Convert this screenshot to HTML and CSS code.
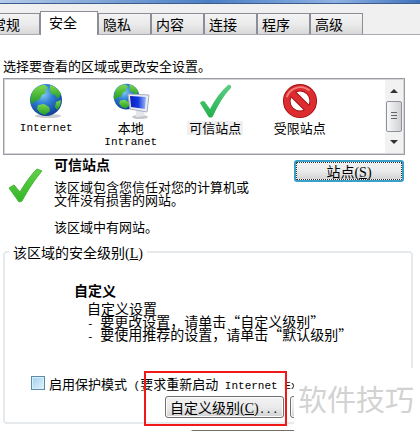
FILE: index.html
```html
<!DOCTYPE html>
<html lang="zh-CN">

<head>
    <meta charset="UTF-8">
    <meta name="viewport" content="width=device-width, initial-scale=1.0">
    <title>Internet 选项</title>
    <link rel="stylesheet" href="styles.css">
</head>

<body>
    <div class="titlebar"></div>

    <nav class="tabs">
        <button class="tab tab-first">常规</button>
        <button class="tab active">安全</button>
        <button class="tab">隐私</button>
        <button class="tab">内容</button>
        <button class="tab">连接</button>
        <button class="tab">程序</button>
        <button class="tab">高级</button>
    </nav>

    <main class="panel">
        <p class="intro">选择要查看的区域或更改安全设置。</p>

        <div class="zones">
            <ul class="zone-list">
                <li class="zone">
                    <svg width="36" height="36" viewBox="0 0 36 36">
                        <defs>
                            <radialGradient id="sea" cx="40%" cy="30%" r="70%">
                                <stop offset="0" stop-color="#8fd0f8" />
                                <stop offset="0.45" stop-color="#2f7fd6" />
                                <stop offset="1" stop-color="#123f9a" />
                            </radialGradient>
                            <linearGradient id="land" x1="0" y1="0" x2="0" y2="1">
                                <stop offset="0" stop-color="#7fd84a" />
                                <stop offset="1" stop-color="#1f9a2c" />
                            </linearGradient>
                        </defs>
                        <ellipse cx="20" cy="33" rx="13" ry="2" fill="#c9ccd0" />
                        <g id="globe">
                            <circle cx="18" cy="17" r="16" fill="url(#sea)" />
                            <path d="M4 10C7 4 12 2 17 2l3 3-3 2 1 3-4 2-3 5-4 1-3 3-2-3z" fill="url(#land)" />
                            <path d="M22 2c5 1 9 5 11 9l-3 5-3-4-4-1-1-4z" fill="url(#land)" />
                            <path d="M10 22l6-1 5 3 1 4-5 4-5-2-3-4z" fill="url(#land)" />
                            <path d="M28 19l5-2-1 6-3 4-2-3z" fill="url(#land)" />
                        </g>
                    </svg>
                    <span class="latin">Internet</span>
                </li>
                <li class="zone">
                    <svg width="40" height="36" viewBox="0 0 40 36">
                        <defs>
                            <linearGradient id="screen" x1="0" y1="0" x2="1" y2="0">
                                <stop offset="0" stop-color="#0a22b8" />
                                <stop offset="0.5" stop-color="#1236e0" />
                                <stop offset="1" stop-color="#9db8f4" />
                            </linearGradient>
                        </defs>
                        <use href="#globe" transform="translate(1 0) scale(0.8)" />
                        <ellipse cx="29" cy="34" rx="8" ry="2" fill="#c4c8ce" />
                        <path d="M25 27l8 1 1 5-9 1z" fill="#e4e6ea" />
                        <path d="M17 11l21 1-2 17-17-3z" fill="#e9edf4" stroke="#a7afbd" />
                        <path d="M19 13l16 1-1 12-14-2z" fill="url(#screen)" />
                    </svg>
                    <span>本地</span>
                    <span class="latin">Intranet</span>
                </li>
                <li class="zone">
                    <svg width="36" height="36" viewBox="0 0 36 36">
                        <defs>
                            <linearGradient id="tick-zone" x1="0" y1="0" x2="0" y2="1">
                                <stop offset="0" stop-color="#5fcf86" />
                                <stop offset="1" stop-color="#22b04c" />
                            </linearGradient>
                        </defs>
                        <path d="M3 20c1-2 4-3 5-1l5 7C18 16 24 8 31 2c2-1 4 1 3 3C27 12 21 22 16 33c-1 2-4 2-5 0z" fill="url(#tick-zone)" />
                    </svg>
                    <span class="selected">可信站点</span>
                </li>
                <li class="zone">
                    <svg width="38" height="38" viewBox="0 0 38 38">
                        <circle cx="19" cy="19" r="14" fill="none" stroke="#a80f14" stroke-width="8" />
                        <path d="M10 10l18 18" stroke="#a80f14" stroke-width="8" />
                        <circle cx="19" cy="19" r="14" fill="none" stroke="#dc2c2f" stroke-width="6" />
                        <path d="M9 9l20 20" stroke="#dc2c2f" stroke-width="6" />
                        <path d="M5 15a15 15 0 0 1 24-7" fill="none" stroke="#f0807e" stroke-width="2" />
                    </svg>
                    <span>受限站点</span>
                </li>
            </ul>
            <div class="scrollbar">
                <svg width="8" height="4" viewBox="0 0 8 4"><path d="M0 4l4-4 4 4z" fill="#333" /></svg>
                <div class="thumb"></div>
                <svg width="8" height="4" viewBox="0 0 8 4"><path d="M0 0h8L4 4z" fill="#333" /></svg>
            </div>
        </div>

        <section class="zone-info">
            <svg class="check" width="36" height="36" viewBox="0 0 36 36">
                <defs>
                    <linearGradient id="tick" x1="0" y1="0" x2="0" y2="1">
                        <stop offset="0" stop-color="#62cf4a" />
                        <stop offset="1" stop-color="#33b726" />
                    </linearGradient>
                </defs>
                <path d="M2 20l5-3 6 7C18 15 24 7 30 1l5 2C28 11 21 22 15 33l-3 1z" fill="url(#tick)" stroke="#49b838" stroke-linejoin="round" />
            </svg>
            <div class="zone-text">
                <h2>可信站点</h2>
                <p>该区域包含您信任对您的计算机或<br>文件没有损害的网站。</p>
                <p>该区域中有网站。</p>
            </div>
            <button class="btn btn-default">站点<span class="key">(<u>S</u>)</span></button>
        </section>

        <fieldset class="level">
            <legend>该区域的安全级别<span class="key">(<u>L</u>)</span></legend>
            <div class="level-text">
                <h2>自定义</h2>
                <p>自定义设置<br><span class="latin">- </span>要更改设置，请单击“自定义级别”<br><span class="latin">- </span>要使用推荐的设置，请单击“默认级别”</p>
            </div>
            <label class="protect">
                <input type="checkbox">
                <span>启用保护模式<span class="latin"> (</span>要求重新启动<span class="latin"> Internet Ex</span></span>
            </label>
            <div class="level-buttons">
                <button class="btn">自定义级别<span class="key">(<u>C</u>)</span><span class="latin">...</span></button>
                <button class="btn btn-reset" aria-label="默认级别"></button>
            </div>
            <div class="highlight"></div>
        </fieldset>

        <button class="btn btn-all" aria-label="重置"></button>
    </main>

    <div class="watermark">软件技巧</div>
</body>

</html>
```

FILE: styles.css
```css
* {
    box-sizing: border-box;
}

body {
    margin: 0;
    height: 100vh;
    position: relative;
    overflow: hidden;
    background: #fff;
    color: #000;
    font-family: "Noto Sans CJK SC", sans-serif;
    font-size: 13px;
    line-height: 13px;
}

h2, p, ul {
    margin: 0;
    padding: 0;
}

h2 {
    font-size: 14px;
    line-height: 16px;
}

button {
    font-family: inherit;
    color: inherit;
}

.latin {
    font-family: "Liberation Mono", monospace;
    font-size: 11px;
    line-height: 1px;
    white-space: pre;
}

.key {
    font-family: "Liberation Serif", serif;
    font-size: 14px;
    line-height: 1px;
}

.titlebar {
    height: 4px;
    background: linear-gradient(to right, #b4cbea, #4a7ec4 50%, #8fb2e4 80%, #3f72bb);
    border-bottom: 1px solid #3c5c8c;
}

/* tabs */
.tabs {
    display: flex;
    align-items: flex-end;
    height: 31px;
    background: #f0f0f0;
    border-bottom: 1px solid #a9abb2;
}

.tab {
    width: 53px;
    height: 21px;
    padding: 0 0 0 4px;
    border: 1px solid #8b8e96;
    border-bottom: 0;
    background: linear-gradient(#f3f3f3, #ebebeb 50%, #d8d8d8);
    font-size: 14px;
    line-height: 20px;
    text-align: left;
}

.tab-first {
    margin-left: -13px;
}

.tab.active {
    width: 58px;
    height: 24px;
    margin-bottom: -1px;
    padding: 0 0 3px 8px;
    background: #fff;
}

.panel {
    padding: 21px 7px 0 3px;
}

.intro {
    line-height: 20px;
    margin-bottom: 2px;
}

/* zone list */
.zones {
    display: flex;
    height: 77px;
    margin-right: 8px;
    border: 1px solid #9a9ca3;
    outline: 1px solid #d4d5d9;
    outline-offset: -2px;
}

.zone-list {
    flex: 1;
    display: grid;
    grid-template-columns: repeat(4, 1fr);
    padding: 4px 42px 0 0;
    list-style: none;
}

.zone {
    display: flex;
    flex-direction: column;
    align-items: center;
}

.zone svg {
    height: 36px;
    margin-bottom: 2px;
}

.zone span {
    line-height: 14px;
}

.zone .selected {
    background: #f0f0f0;
    padding: 0 2px;
}

.scrollbar {
    width: 18px;
    margin: 1px;
    padding: 9px 0;
    display: flex;
    flex-direction: column;
    align-items: center;
    justify-content: space-between;
    background: #f2f2f2;
}

.thumb {
    width: 16px;
    height: 31px;
    padding: 10px 4px;
    border: 1px solid #8f9299;
    border-radius: 2px;
    background: repeating-linear-gradient(#666 0 1px, transparent 1px 3px) content-box,
        linear-gradient(to right, #f8f8f8, #cfd1d5);
}

/* selected zone */
.zone-info {
    display: flex;
    align-items: flex-start;
    height: 87px;
    padding: 1px 9px 0 4px;
}

.check {
    margin-top: 12px;
}

.zone-text {
    flex: 1;
    margin-left: 11px;
    white-space: nowrap;
}

.zone-text p {
    margin-top: 8px;
}

.zone-text p + p {
    margin-top: 14px;
}

.btn {
    height: 22px;
    padding: 0 4px;
    border: 1px solid #707070;
    border-radius: 3px;
    background: linear-gradient(#f2f2f2, #ebebeb 50%, #d2d2d2);
    box-shadow: inset 0 0 0 1px #fcfcfc;
    font-size: 14px;
    line-height: 18px;
    white-space: nowrap;
}

.btn-default {
    width: 110px;
    margin-top: 4px;
    border: 2px solid #3aa0c8;
    outline: 1px dotted #333;
    outline-offset: -3px;
}

/* security level */
.level {
    position: relative;
    min-width: 0;
    height: 182px;
    margin: 0;
    padding: 0 0 0 26px;
    border: 2px solid #e6eaec;
    border-radius: 4px;
}

.level legend {
    margin-left: -22px;
    padding: 0 4px;
    font-size: 14px;
    line-height: 20px;
}

.level-text {
    padding: 20px 0 0 43px;
    white-space: nowrap;
}

.level-text p {
    padding: 4px 0 0 13px;
    font-size: 14px;
}

.protect {
    display: flex;
    align-items: center;
    gap: 4px;
    margin-top: 35px;
    white-space: nowrap;
}

.protect input {
    appearance: none;
    flex: none;
    width: 14px;
    height: 14px;
    margin: 0;
    border: 1px solid #5d8aa6;
    background: linear-gradient(135deg, #9fd0ef, #e2f4fd);
    box-shadow: inset 0 0 0 1px #d5effc;
}

.level-buttons {
    display: flex;
    gap: 6px;
    margin-top: 6px;
    padding-left: 134px;
}

.btn-reset {
    width: 104px;
}

.highlight {
    position: absolute;
    left: 139px;
    bottom: -4px;
    width: 143px;
    height: 55px;
    border: 2px solid #f01818;
}

.btn-all {
    display: block;
    width: 200px;
    margin: 6px 0 0 187px;
}

.watermark {
    position: absolute;
    right: 0;
    bottom: 0;
    width: 126px;
    height: 63px;
    padding-left: 4px;
    background: #fff;
    color: #d2d2d2;
    font-size: 29px;
    line-height: 60px;
    white-space: nowrap;
}
```
